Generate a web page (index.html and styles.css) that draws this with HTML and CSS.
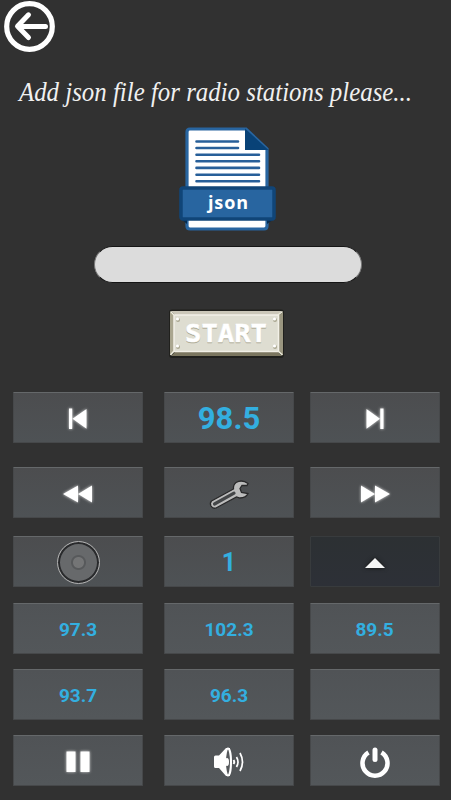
FILE: index.html
```html
<!DOCTYPE html>
<html lang="en">
<head>
    <meta charset="UTF-8">
    <meta name="viewport" content="width=device-width, initial-scale=1.0">
    <title>Radio</title>
    <link rel="stylesheet" href="styles.css">
</head>
<body>
    <button class="back" aria-label="Back">
        <svg width="52" height="52" viewBox="0 0 52 52">
            <circle cx="25.500" cy="26.500" r="22.800" stroke-width="5.200"/>
            <path d="M41.500 26.500H14M24.500 14.800L13.500 26.200L24.500 37.500" stroke-width="5"/>
        </svg>
    </button>

    <h1>
        <svg width="451" height="44" viewBox="0 0 451 44">
            <text x="19" y="27" textLength="393" lengthAdjust="spacingAndGlyphs">Add json file for radio stations please...</text>
        </svg>
    </h1>

    <!-- File picker -->
    <div class="picker">
        <svg class="jsonFile" width="98" height="106" viewBox="0 0 98 106">
            <path d="M11 3H67L88 23V100Q88 103 85 103H11Q8 103 8 100V6Q8 3 11 3Z" fill="#fff" stroke="#2865a0" stroke-width="3.2"/>
            <path d="M66 2.500L89.500 24H66Z" fill="#084277"/>
            <path d="M17.500 15.500H59M17.500 22H59M17.500 28.700H80M17.500 35.200H80M17.500 41.900H80M17.500 48.700H80M17.500 55.200H80" stroke="#275f99" stroke-width="2.600" stroke-linecap="round"/>
            <path d="M2 93L8 98V93ZM95 93L88 98V93Z" fill="#062b4e"/>
            <rect x="2" y="62" width="93" height="31" rx="2" fill="#2865a0" stroke="#104578" stroke-width="3.500"/>
            <text x="29" y="82.500" textLength="40" fill="#fff">json</text>
        </svg>
        <input type="text" aria-label="File">
        <button class="start">
            <svg width="116" height="50" viewBox="0 0 116 50">
                <rect x="1" y="0.500" width="115" height="48.500" rx="3" fill="#20201d"/>
                <path d="M3 2H114L110 6H7Z" fill="#cbc7b9"/>
                <path d="M3 47H114L109 42H8Z" fill="#7b765f"/>
                <path d="M2 3L7 7V42L2 46Z" fill="#aaa68f"/>
                <path d="M115 3L110 7V42L115 46Z" fill="#9a9680"/>
                <rect x="6" y="6" width="104.500" height="36.500" fill="#deddd1" stroke="#f2f0e7" stroke-width="1.500"/>
                <path d="M2.500 2.500L6 6M114.500 2.500L110 6M2.500 46L6 42M114.500 46L110 42" stroke="#f1efdf" stroke-width="1.500"/>
                <g fill="#aaa791"><circle cx="10" cy="11" r="2"/><circle cx="107" cy="11" r="2"/><circle cx="10" cy="38" r="2"/><circle cx="107" cy="38" r="2"/></g>
                <g fill="#fff"><circle cx="9.500" cy="10" r="1.600"/><circle cx="106.500" cy="10" r="1.600"/><circle cx="9.500" cy="37" r="1.600"/><circle cx="106.500" cy="37" r="1.600"/></g>
                <text class="shadow" x="17" y="34" textLength="82" lengthAdjust="spacingAndGlyphs" aria-hidden="true">START</text>
                <text x="17" y="32.500" textLength="82" lengthAdjust="spacingAndGlyphs">START</text>
            </svg>
        </button>
    </div>

    <!-- Radio controls -->
    <div id="radio">
        <button aria-label="Previous station"><svg class="glow" width="60" height="40" viewBox="0 0 60 40"><path d="M21 9.500H24.200V30H21ZM24.500 19.700L38.500 10V29.700Z"/></svg></button>
        <button class="frequency">98.5</button>
        <button aria-label="Next station"><svg class="glow" width="60" height="40" viewBox="0 0 60 40"><path d="M35.300 9.500H38.500V30H35.300ZM35 19.700L21.500 10V29.700Z"/></svg></button>

        <button aria-label="Rewind"><svg class="glow" width="60" height="40" viewBox="0 0 60 40"><path d="M15 20L30 11.500V28.500ZM30 20L44 11.500V28.500Z"/></svg></button>
        <button aria-label="Settings">
            <svg width="60" height="40" viewBox="0 0 60 40" class="wrench">
                <path d="M12.500 27L34.500 15Q34 11 37 8.500Q43 5 49 9.500L48 11.500L43 11.500L41 14.500L42.500 18.500L49 19.500Q47 24 41 24L37.500 23L17 34Q14 35 12 32Q10.500 29 12.500 27Z"/>
                <path class="slot" d="M15.500 30L35 19.200"/>
            </svg>
        </button>
        <button aria-label="Fast forward"><svg class="glow" width="60" height="40" viewBox="0 0 60 40"><path d="M45 20L30 11.500V28.500ZM30 20L16 11.500V28.500Z"/></svg></button>

        <button aria-label="Speaker"><span class="knob"></span></button>
        <button class="preset">1</button>
        <button class="pressed" aria-label="Up"><svg class="up" width="24" height="14" viewBox="0 0 24 14"><path d="M12 2L22 12H2Z"/></svg></button>

        <button>97.3</button>
        <button>102.3</button>
        <button>89.5</button>

        <button>93.7</button>
        <button>96.3</button>
        <button aria-label="Empty"></button>

        <button aria-label="Pause"><svg class="glow" width="60" height="40" viewBox="0 0 60 40"><path d="M18.500 9.500H27.500V30H18.500ZM32.500 9.500H41.500V30H32.500Z"/></svg></button>
        <button aria-label="Volume">
            <svg width="60" height="40" viewBox="0 0 60 40">
                <path d="M15 15Q15 13.500 16.500 13.500H20L27 6H31V34H27L20 26H16.500Q15 26 15 24.500Z" fill="#fff"/>
                <g fill="none" stroke="#fff">
                    <ellipse cx="29" cy="20" rx="3" ry="13.500" fill="#55585b" stroke-width="2"/>
                    <path d="M34.500 18Q36 20 34.500 22" stroke-width="2"/>
                    <path d="M37.500 15Q40.500 20 37.500 25M41 11Q46 20 41 29" stroke-width="1.700"/>
                </g>
                <ellipse cx="28" cy="20" rx="2" ry="4" fill="#fff"/>
            </svg>
        </button>
        <button aria-label="Power"><svg width="60" height="40" viewBox="0 0 60 40" class="power"><path d="M23.500 10.500A12.500 12.500 0 1 0 36.500 10.500"/><path class="bar" d="M30 8V17.500"/></svg></button>
    </div>
</body>
</html>
```

FILE: styles.css
```css
* {
    box-sizing: border-box;
}

body {
    width: 451px;
    height: 800px;
    margin: 0;
    overflow: hidden;
    background-color: #313131;
    font-family: Roboto, sans-serif;
}

button {
    padding: 0;
    border: none;
    background: none;
    font-family: inherit;
    cursor: pointer;
}

svg {
    display: block;
}

.back {
    display: block;
    margin-left: 4px;
    height: 70px;
}

.back svg {
    margin-bottom: 18px;
    fill: none;
    stroke: #fff;
    stroke-linecap: round;
    stroke-linejoin: round;
}

h1 {
    height: 44px;
    margin: 4px 0 8px;
}

h1 text {
    font: italic 27px "Liberation Serif", serif;
    fill: #f0f0f0;
}

.picker {
    display: flex;
    flex-direction: column;
    align-items: center;
}

.jsonFile text {
    font: bold 18px "Open Sans", sans-serif;
}

.picker input {
    width: 268px;
    height: 37px;
    margin: 14px 0 26px 5px;
    border: 1px solid #151515;
    border-left-color: #777;
    border-right-color: #777;
    border-radius: 19px;
    background-color: #dcdcdc;
}

.start text {
    font: bold 25px "DejaVu Sans Mono", monospace;
    fill: #fff;
    stroke: #fff;
    stroke-width: 0.5px;
}

.start .shadow {
    fill: #aaa791;
    stroke: #aaa791;
}

.picker .jsonFile {
    margin-left: 4px;
}

#radio {
    display: grid;
    grid-template-columns: 151px 145.5px 130px;
    grid-template-rows: 75px 69px 67px 66px 66px 51px;
    padding: 33px 0 0 13px;
}

#radio button {
    display: flex;
    justify-content: center;
    align-items: center;
    width: 130px;
    height: 51px;
    padding-top: 2px;
    border: 1px solid #46484a;
    border-top: 1px solid #65686a;
    border-radius: 1px;
    background: linear-gradient(#4c4d4f, #4e5255);
    color: #33afe0;
    font-size: 19px;
    font-weight: bold;
}

#radio button:nth-child(n+10) {
    background: linear-gradient(#505356, #53575a);
}

#radio .frequency {
    font-size: 31px;
}

#radio .preset {
    font-size: 25px;
}

.glow {
    fill: #fff;
    filter: drop-shadow(0 0 1.5px #ddd);
}

.wrench {
    fill: #bcbcbc;
    stroke: #29292a;
    stroke-width: 1.3;
}

.wrench .slot {
    stroke: #444648;
    stroke-width: 3.2;
    stroke-linecap: round;
}

.knob {
    width: 43px;
    height: 43px;
    margin-top: -1px;
    border: 1.5px solid #b0b0b0;
    border-radius: 50%;
    box-shadow: inset 0 0 0 2px #292a2c;
    background: radial-gradient(circle, #747576 0 5px, #57595b 6px 7px, #67696b 8px);
}

#radio .pressed {
    border-color: #383b3d;
    background: linear-gradient(#2c3033, #2d3037);
}

.up {
    fill: #f6f6f6;
    filter: drop-shadow(0 0 2px #111);
}

.power {
    fill: none;
    stroke: #fff;
    stroke-width: 4.5;
}

.power .bar {
    stroke-width: 5;
    stroke-linecap: round;
}
```
